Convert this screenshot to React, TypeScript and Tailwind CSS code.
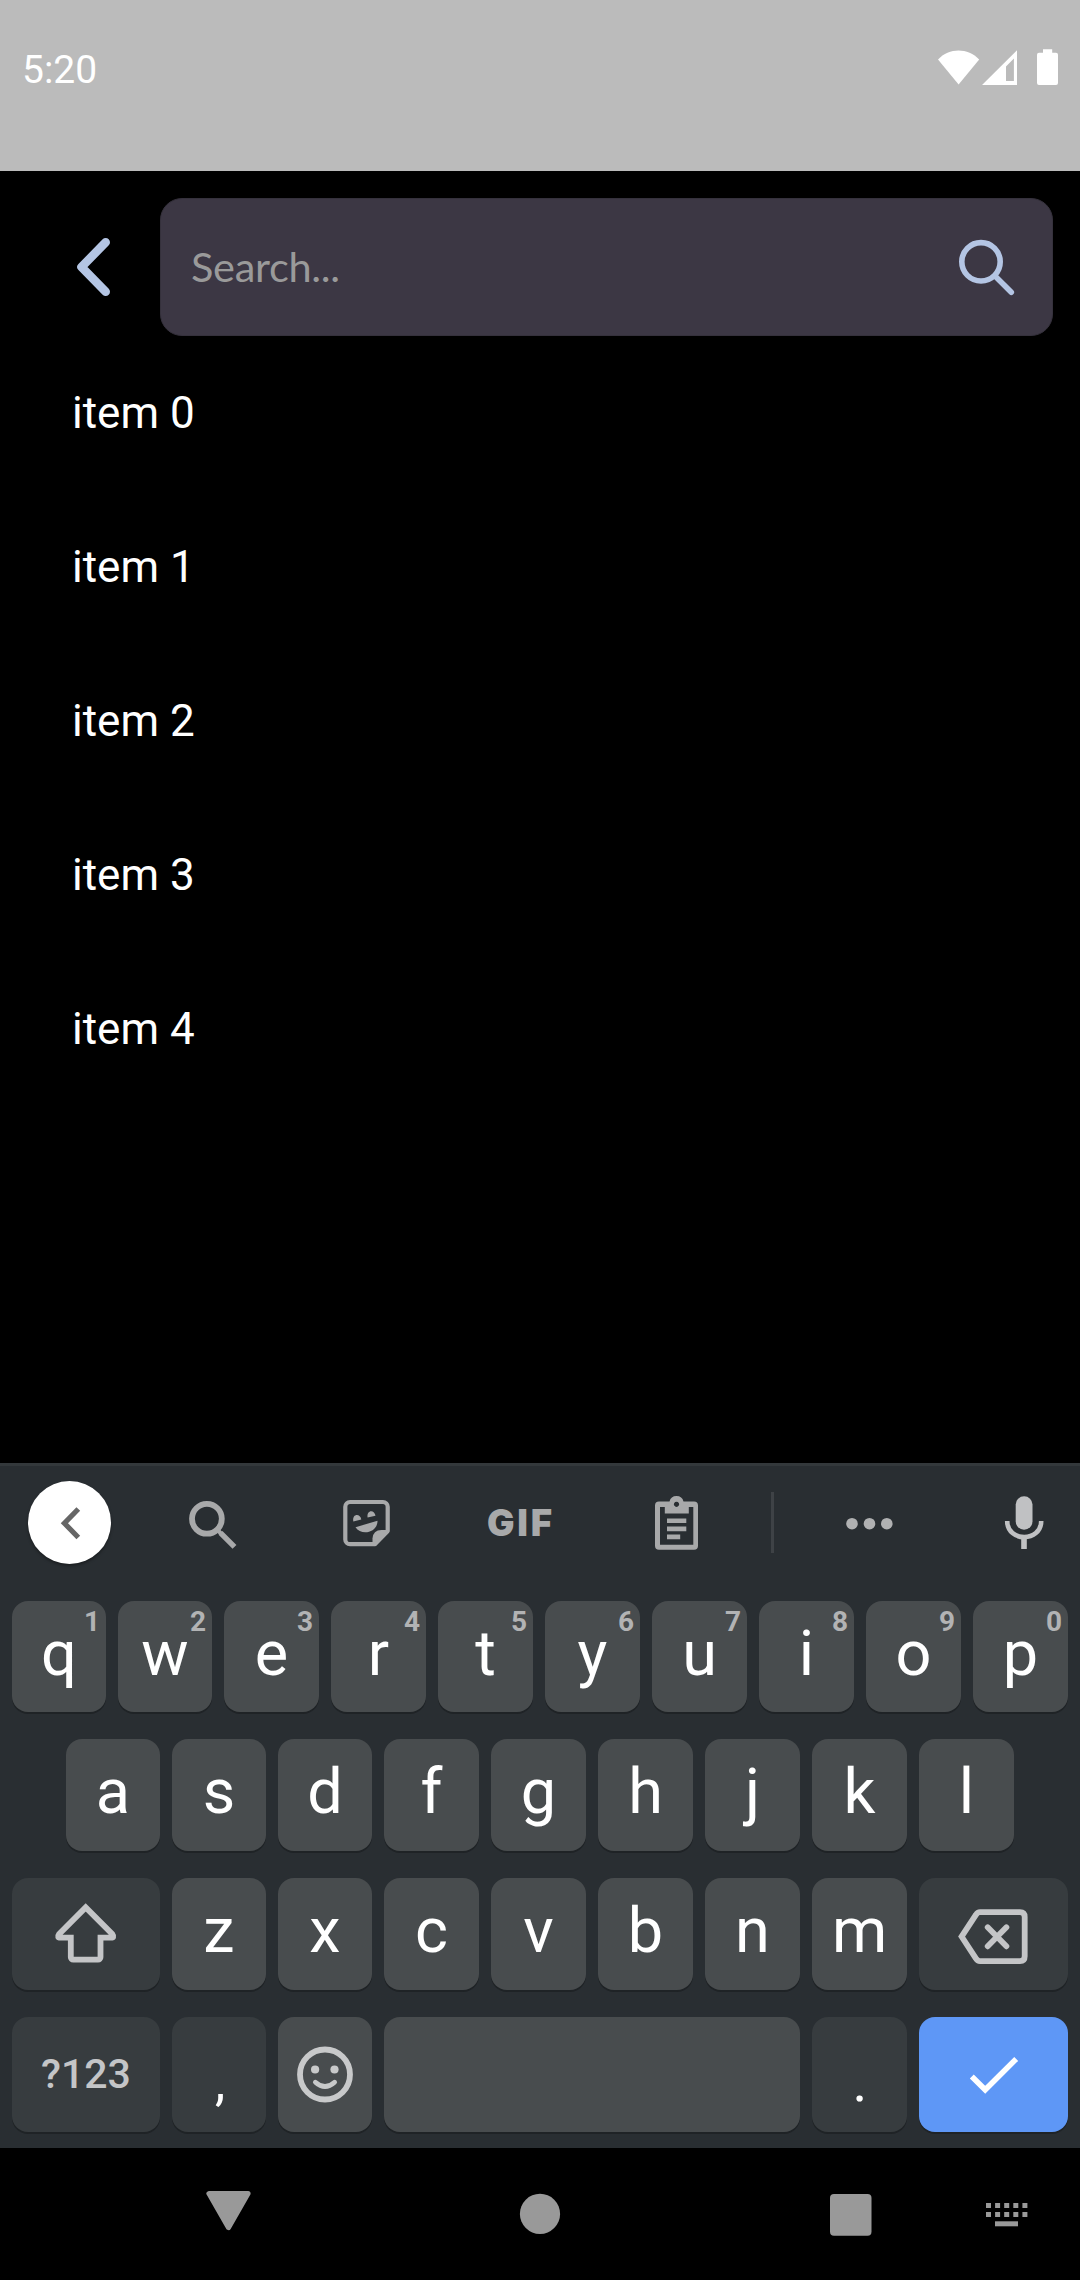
import type { ReactNode } from "react";

const ITEMS = ["item 0", "item 1", "item 2", "item 3", "item 4"];
const ROW_1 = ["q", "w", "e", "r", "t", "y", "u", "i", "o", "p"];
const ROW_2 = ["a", "s", "d", "f", "g", "h", "j", "k", "l"];
const ROW_3 = ["z", "x", "c", "v", "b", "n", "m"];

const KEY = "relative flex shrink-0 justify-center rounded-[16px] shadow-[0_2px_0_#1f2326]";

function LetterKey({ label, hint, narrow }: { label: string; hint?: string; narrow?: boolean }) {
  return (
    <button
      className={`${KEY} ${narrow ? "w-[94px]" : "w-[95px]"} h-full bg-[#484c4e] text-[63px] leading-[105px] text-white`}
    >
      {label}
      {hint && (
        <span className="absolute top-[5px] right-[6px] text-[28px] leading-[32px] font-bold text-[#b2b3b4]">
          {hint}
        </span>
      )}
    </button>
  );
}

function WideKey({ children, end }: { children: ReactNode; end?: boolean }) {
  return (
    <button className={`${KEY} ${end ? "w-[149px]" : "w-[148px]"} h-full items-center bg-[#373c3f]`}>
      {children}
    </button>
  );
}

function StatusBar() {
  return (
    <header className="flex h-[171px] items-start justify-between bg-[#bbbbbb] pl-[22px] text-white">
      <span className="mt-[46px] text-[39px] leading-[48px]">5:20</span>
      <svg className="mt-[45px] h-[45px] w-[150px]" viewBox="930 45 150 45" fill="#fff">
        <path d="M938 59.5 C949 47.5 968 47.5 979.2 59.5 L958.6 84.4 Z" />
        <path fillRule="evenodd" d="M982 85 L1017 50.3 V85 Z M1006 66.5 V81 H1013.9 V58.500 Z" />
        <path d="M1043 49.3 h9.2 v3.4 h3.8 a2 2 0 0 1 2 2 V83 a2 2 0 0 1 -2 2 h-17 a2 2 0 0 1 -2 -2 V54.700 a2 2 0 0 1 2 -2 h4 Z" />
      </svg>
    </header>
  );
}

function SearchHeader() {
  return (
    <div className="flex h-[165px] items-end">
      <button className="flex h-[138px] w-[160px] items-center pl-[73px]">
        <svg className="h-[66px] w-[42px]" viewBox="73 234 42 66" fill="none" stroke="#b4c5e4" strokeWidth="8.6" strokeLinecap="round" strokeLinejoin="round">
          <path d="M105.700 242.300 L81.500 267 L105.700 291.700" />
        </svg>
      </button>
      <div className="flex h-[138px] w-[893px] items-center justify-between rounded-[22px] border border-[#35313c] bg-[#3c3744] pr-[34px] pl-[30px]">
        <span className="mb-[2px] font-['Lato'] text-[41.5px] leading-[60px] tracking-[-0.3px] text-[#9a9a9a]">
          Search...
        </span>
        <svg className="h-[66px] w-[62px]" viewBox="956 234 62 66" fill="none" stroke="#b4c5e4" strokeWidth="5.6" strokeLinecap="round">
          <circle cx="981" cy="261.800" r="19.200" />
          <path d="M996 277 L1011.300 292.300" />
        </svg>
      </div>
    </div>
  );
}

function Toolbar() {
  return (
    <div className="flex h-[135px] items-start pt-[15px] pl-[28px]">
      <button className="flex h-[83px] w-[83px] shrink-0 items-center justify-center rounded-full bg-white shadow-[0_2px_3px_rgba(0,0,0,0.35)]">
        <svg className="h-[60px] w-[60px]" viewBox="39.500 1492.500 60 60" fill="none" stroke="#666" strokeWidth="5.200">
          <path d="M77.800 1508.500 L63.900 1522.700 L77.800 1537" />
        </svg>
      </button>
      <div className="flex h-[83px] items-center">
        <svg className="ml-[73px] h-[60px] w-[56px]" viewBox="184 1493 56 60" fill="none" stroke="#a8a9aa">
          <circle cx="206.900" cy="1518.800" r="14.900" strokeWidth="5.800" />
          <path d="M218 1530.500 L221 1533.500" strokeWidth="4" />
          <path d="M220.500 1532.800 L234.500 1546.900" strokeWidth="5.400" />
        </svg>
        <svg className="ml-[98px] h-[60px] w-[56px]" viewBox="338 1493 56 60" fill="#a8a9aa">
          <path
            d="M350 1502 H383 a4.700 4.700 0 0 1 4.700 4.700 V1531 L374.500 1544.200 H350 a4.700 4.700 0 0 1 -4.700 -4.700 V1506.700 a4.700 4.700 0 0 1 4.700 -4.700 Z"
            fill="none" stroke="#a8a9aa" strokeWidth="4.200" strokeLinejoin="round"
          />
          <path d="M389 1530 V1532.500 L376 1546 H372.500 V1538.500 Q373 1530 381.500 1530 Z" />
          <path d="M353.300 1521.400 C352 1513.200 360.500 1513.200 361.300 1519.600 Z M367.600 1517.600 C366.300 1509.300 374.800 1509.300 375.500 1515.800 Z" />
          <path d="M355.500 1527.200 L377.500 1520.800 C377.500 1533 361 1536 355.500 1527.200 Z" />
        </svg>
        <span className="ml-[93px] w-[68px] font-['Inter'] text-[36.500px] leading-[60px] font-black tracking-[2.800px] whitespace-nowrap text-[#a8a9aa]">GIF</span>
        <svg className="ml-[95px] h-[60px] w-[54px]" viewBox="650 1493 54 60" fill="#a8a9aa">
          <path
            fillRule="evenodd"
            d="M659 1501.500 H669.500 A7.200 7.200 0 0 1 683.500 1501.500 H694 a4 4 0 0 1 4 4 V1545.700 a4 4 0 0 1 -4 4 H659 a4 4 0 0 1 -4 -4 V1505.500 a4 4 0 0 1 4 -4 Z M660 1507 V1544.800 H693.300 V1507 H688.800 V1513.500 H664.800 V1507 Z M676.500 1501.700 a2.600 2.600 0 1 0 0.010 0 Z"
          />
          <path d="M667 1518.500 h19.300 v4.500 h-19.300 Z M667 1526.500 h19.300 v4.700 h-19.300 Z M667 1534.600 h13.200 v4.700 h-13.200 Z" />
        </svg>
        <div className="ml-[67px] h-[61px] w-[3px] bg-[#3e4246]" />
        <svg className="ml-[66px] h-[60px] w-[60px]" viewBox="840 1493 60 60" fill="#b0b1b2">
          <circle cx="852" cy="1523.700" r="5.800" />
          <circle cx="869.500" cy="1523.700" r="5.800" />
          <circle cx="886.800" cy="1523.700" r="5.800" />
        </svg>
        <svg className="ml-[99px] h-[60px] w-[50px]" viewBox="999 1493 50 60" fill="#c0c1c3">
          <rect x="1015.700" y="1496.200" width="16.800" height="33.500" rx="8.400" />
          <path d="M1007.200 1521 C1007.200 1542.500 1041.200 1542.500 1041.200 1521" fill="none" stroke="#c0c1c3" strokeWidth="4.600" />
          <rect x="1021.200" y="1537" width="5.600" height="12" />
        </svg>
      </div>
    </div>
  );
}

function Keyboard() {
  return (
    <section className="h-[685px] border-t-[3px] border-[#33383b] bg-[#292e32]">
      <Toolbar />
      <div className="flex flex-col gap-[27px] px-[12px]">
        <div className="flex h-[111px] gap-[12px]">
          {ROW_1.map((letter, i) => (
            <LetterKey key={letter} label={letter} hint={String((i + 1) % 10)} narrow={i < 2} />
          ))}
        </div>
        <div className="flex h-[112px] gap-[12px] px-[54px]">
          {ROW_2.map((letter, i) => (
            <LetterKey key={letter} label={letter} narrow={i < 3} />
          ))}
        </div>
        <div className="flex h-[112px] gap-[12px]">
          <WideKey>
            <svg className="h-[72px] w-[72px]" viewBox="50 1898 72 72" fill="none" stroke="#c4c5c7" strokeWidth="5.800" strokeLinejoin="round">
              <path strokeLinejoin="miter" d="M85.700 1907.400 L59 1934.200 Q56.500 1937.600 60.500 1937.600 H70.800 V1957.200 a2.500 2.500 0 0 0 2.500 2.500 H98 a2.500 2.500 0 0 0 2.500 -2.500 V1937.600 H110.900 Q114.900 1937.600 112.400 1934.200 Z" />
            </svg>
          </WideKey>
          {ROW_3.map((letter, i) => (
            <LetterKey key={letter} label={letter} narrow={i < 2} />
          ))}
          <WideKey end>
            <svg className="mr-[1px] h-[72px] w-[80px]" viewBox="953 1898 80 72" fill="none" stroke="#c4c5c7" strokeWidth="5.800" strokeLinecap="round">
              <path d="M980 1912.200 H1020 Q1024.700 1912.200 1024.700 1917 V1956.300 Q1024.700 1961.100 1020 1961.100 H980 Q977.500 1961.100 976 1958.600 L961.600 1936.600 L976 1914.700 Q977.500 1912.200 980 1912.200 Z" />
              <path d="M987.700 1927.300 L1006.400 1946.300 M1006.400 1927.300 L987.700 1946.300" />
            </svg>
          </WideKey>
        </div>
        <div className="flex h-[115px] gap-[12px]">
          <WideKey>
            <span className="text-[41px] leading-[117px] font-medium text-[#c4c5c7]">?123</span>
          </WideKey>
          <button className={`${KEY} w-[94px] bg-[#373c3f] pl-[2px] text-[52px] leading-[132px] text-white`}>,</button>
          <button className={`${KEY} w-[94px] items-center bg-[#484c4e]`}>
            <svg className="h-[62px] w-[62px]" viewBox="294 2043.500 62 62" fill="none" stroke="#c8c9ca">
              <circle cx="325" cy="2074" r="25" strokeWidth="5.800" />
              <circle cx="315.100" cy="2069" r="4.100" fill="#c8c9ca" stroke="none" />
              <circle cx="334.500" cy="2069" r="4.100" fill="#c8c9ca" stroke="none" />
              <path d="M315.400 2081.700 Q325 2090.500 334.600 2081.700" strokeWidth="4.800" strokeLinecap="round" />
            </svg>
          </button>
          <button className={`${KEY} w-[416px] bg-[#484c4e]`} aria-label="space" />
          <button className={`${KEY} w-[95px] bg-[#373c3f] pl-[1px] text-[56px] leading-[130px] text-white`}>.</button>
          <button className={`${KEY} w-[149px] items-center bg-[#5e97f6]`}>
            <svg className="h-[60px] w-[60px]" viewBox="963.500 2044.500 60 60" fill="none" stroke="#fff" strokeWidth="5.600">
              <path d="M971.300 2076 L984.700 2089.300 L1015.700 2058.400" />
            </svg>
          </button>
        </div>
      </div>
    </section>
  );
}

function NavBar() {
  const dots = [0, 1, 2, 3, 4];
  return (
    <nav className="flex h-[132px] items-start bg-black pt-[37px] pl-[200px]">
      <svg className="h-[60px] w-[56px]" viewBox="200 2185 56 60" fill="#999" stroke="#999" strokeWidth="5" strokeLinejoin="round">
        <path d="M208.900 2193.600 H248.100 L228.500 2227.700 Z" />
      </svg>
      <svg className="ml-[254px] h-[60px] w-[60px]" viewBox="510 2185 60 60" fill="#999">
        <circle cx="540" cy="2213.900" r="20.100" />
      </svg>
      <svg className="ml-[250px] h-[60px] w-[60px]" viewBox="820 2185 60 60" fill="#999">
        <rect x="830" y="2194" width="41.500" height="41.800" rx="4" />
      </svg>
      <svg className="ml-[100px] h-[60px] w-[56px]" viewBox="980 2185 56 60" fill="#999">
        {dots.map((i) => (
          <g key={i}>
            <rect x={986 + i * 9.1} y="2203" width="5" height="5" />
            <rect x={986 + i * 9.1} y="2212" width="5" height="5" />
          </g>
        ))}
        <rect x="995" y="2221.300" width="23" height="5" />
      </svg>
    </nav>
  );
}

export default function App() {
  return (
    <div className="flex h-[2280px] w-[1080px] flex-col overflow-hidden bg-black font-['Roboto',sans-serif]">
      <StatusBar />
      <SearchHeader />
      <ul className="flex-1 text-white">
        {ITEMS.map((item) => (
          <li key={item} className="flex h-[154px] items-center pl-[72px] text-[44px] leading-[60px]">
            {item}
          </li>
        ))}
      </ul>
      <Keyboard />
      <NavBar />
    </div>
  );
}
